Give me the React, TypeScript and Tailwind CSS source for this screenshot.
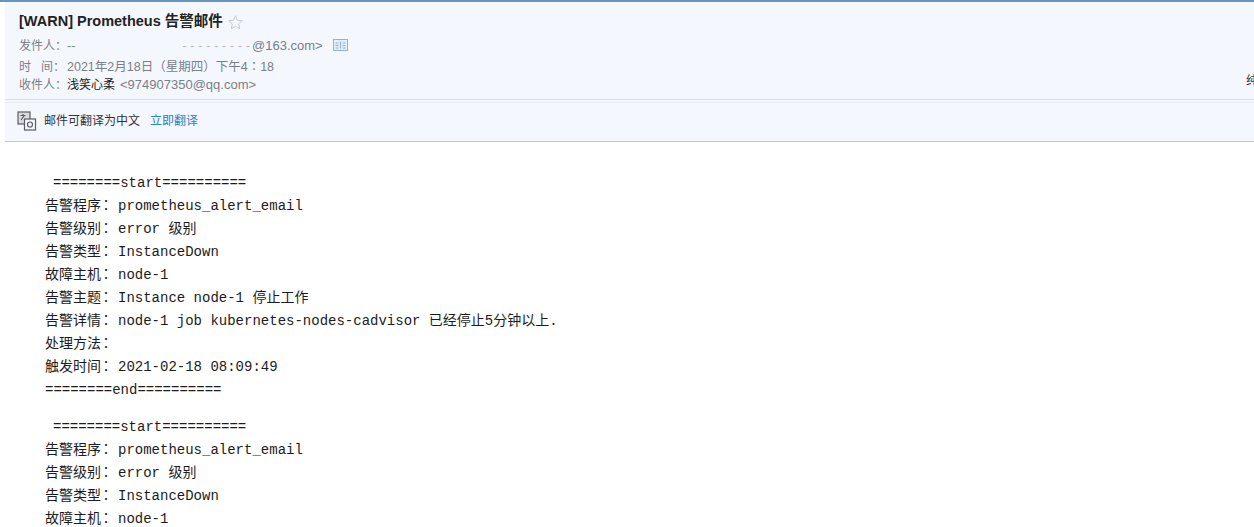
import React from 'react'

function Colon() {
    return <span className="[font-family:'Noto_Sans_CJK_TC',sans-serif]">：</span>
}

function Row({ label, children }: { label: string; children?: React.ReactNode }) {
    return (
        <div className="flex h-[23px] items-baseline">
            <span className="flex w-[73px] shrink-0 items-baseline">{label}<span className="-ml-[2px]"><Colon /></span></span>
            <span>{children}</span>
        </div>
    )
}

function Block({ full }: { full: boolean }) {
    return (
        <div className="mb-[14px]">
            <p className="h-[23px] pl-[8px] pt-[2px]">========start==========</p>
            <Row label="告警程序">prometheus_alert_email</Row>
            <Row label="告警级别">error 级别</Row>
            <Row label="告警类型">InstanceDown</Row>
            <Row label="故障主机">node-1</Row>
            {full && (
                <>
                    <Row label="告警主题">Instance node-1 停止工作</Row>
                    <Row label="告警详情">node-1 job kubernetes-nodes-cadvisor 已经停止5分钟以上.</Row>
                    <Row label="处理方法" />
                    <Row label="触发时间">2021-02-18 08:09:49</Row>
                    <p className="h-[23px] pt-[2px]">========end==========</p>
                </>
            )}
        </div>
    )
}

export default function App() {
    return (
        <div className="h-[527px] w-[1254px] overflow-hidden bg-white [font-family:'Liberation_Sans','Noto_Sans_CJK_SC',sans-serif]">
            {/* Header */}
            <div className="h-[2px] bg-[#6a94c0]" />
            <div className="ml-[5px] bg-[#f4f7fe]">
                <div className="relative h-[98px] border-b border-[#dcdfe6] pl-[14px] pt-[10px]">
                    <div className="flex h-[20px] items-center">
                        <h1 className="text-[14.500px] font-bold text-[#222]">[WARN] Prometheus 告警邮件</h1>
                        <svg width="17" height="17" viewBox="0 0 24 24" fill="none" stroke="#c2c7cc" strokeWidth="1.3" className="ml-[4px]">
                            <path d="M12 2.500l2.800 6.300 6.700.7-5 4.500 1.400 6.700-5.900-3.400-5.900 3.400 1.400-6.700-5-4.500 6.700-.7z" />
                        </svg>
                    </div>
                    <div className="mt-[4px] text-[12px] leading-[19.500px] text-[#7b7f86]">
                        <div className="flex h-[19.500px] items-baseline">
                            <span className="w-[48px]">发件人：</span>
                            <span className="flex w-[185px] justify-between pr-[2px] text-[13px]">
                                <span className="text-[#7c9a62]">--</span>
                                <span className="text-[#b4b9c0]">- - - - - - - - -</span>
                            </span>
                            <span className="text-[13px]">@163.com&gt;</span>
                            <svg width="16" height="13" viewBox="0 0 16 13" fill="#e4eef8" stroke="#8fb2d6" className="ml-[10px] self-center">
                                <rect x="0.500" y="0.500" width="14" height="11" />
                                <path d="M2.500 4h3M2.500 6.500h3M2.500 9h3M7.500 2.500v7M9.500 4h3M9.500 6.500h3M9.500 9h3" fill="none" />
                            </svg>
                        </div>
                        <div className="flex h-[19.500px] items-baseline">
                            <span className="w-[48px]">时&nbsp;&nbsp;&nbsp;间：</span>
                            <span className="text-[12.500px]">2021年2月18日（星期四）下午4<Colon />18</span>
                        </div>
                        <div className="flex h-[19.500px] items-baseline">
                            <span className="w-[48px]">收件人：</span>
                            <span className="text-[#222]">浅笑心柔</span>
                            <span className="ml-[5px] text-[13px]">&lt;974907350@qq.com&gt;</span>
                        </div>
                    </div>
                    <span className="absolute right-0 top-[70px] w-[8px] overflow-hidden text-[12px] leading-[19.500px] text-[#333]">纯</span>
                </div>
                <div className="mt-[2px] flex h-[40px] items-center border-y border-t-[#e6e9f0] border-b-[#c4c7cc] pb-[3px] pl-[12px]">
                    <svg width="20" height="20" viewBox="0 0 20 20" fill="none" stroke="#5a5d62" strokeWidth="1.200">
                        <rect x="1" y="1" width="12" height="12" fill="#d9dbdf" />
                        <path d="M3.500 4.500h5M6 3v1.500M4 9l3-4" />
                        <rect x="7.500" y="8" width="11" height="11" fill="#f4f7fe" />
                        <circle cx="13" cy="13.500" r="2.500" />
                    </svg>
                    <span className="ml-[7px] text-[12px] text-[#333]">邮件可翻译为中文</span>
                    <span className="ml-[10px] text-[12px] text-[#2a84c6]">立即翻译</span>
                </div>
            </div>

            {/* Mail body */}
            <div className="pl-[45px] pt-[28px] text-[14px] leading-[23px] text-[#1c1c1c] [font-family:'Liberation_Mono','Noto_Sans_CJK_SC',monospace]">
                <Block full />
                <Block full={false} />
            </div>
        </div>
    )
}
